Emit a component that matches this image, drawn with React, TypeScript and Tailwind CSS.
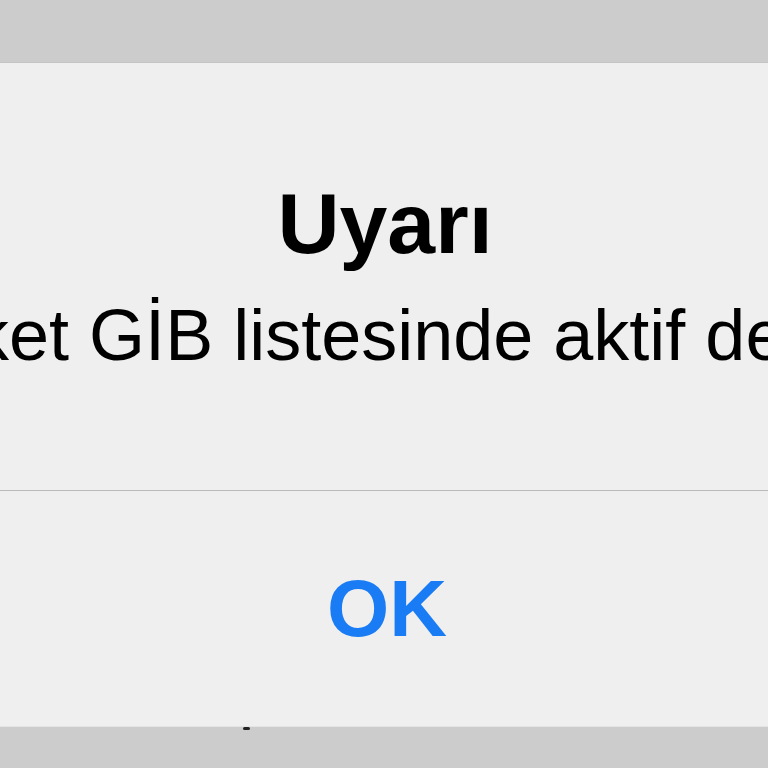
import React from "react";

export default function App() {
  return (
    <div
      className="w-[768px] h-[768px] flex flex-col bg-[#cccccc] overflow-hidden"
      style={{ fontFamily: '"Liberation Sans", Arial, sans-serif' }}
    >
      <div className="h-[63px] shrink-0 bg-[#cccccc] border-b border-[#c4c4c4]" />
      <div className="flex-1 flex flex-col bg-[#efefef] overflow-hidden">
        <div className="h-[427px] shrink-0 flex flex-col overflow-hidden">
          <div className="pt-[117px] flex justify-center">
            <h1 className="text-[86px] leading-none font-bold text-black ml-[2px]">
              Uyarı
            </h1>
          </div>
          <div className="mt-[33px] whitespace-nowrap ml-[-115px]">
            <p className="text-[72px] leading-none text-black">
              Paket GİB listesinde aktif değildir.
            </p>
          </div>
        </div>
        <div className="h-px shrink-0 bg-[#b9b9b9]" />
        <div className="flex-1 flex items-center justify-center">
          <span className="text-[80px] leading-none font-bold text-[#1a7cf5] ml-[6px]">
            OK
          </span>
        </div>
      </div>
      <div className="h-[42px] shrink-0 bg-[#cccccc] border-t border-[#e4e4e4]">
        <div className="ml-[243px] mt-[0px] w-[7px] h-[3px] rounded-full bg-[#222222]" />
      </div>
    </div>
  );
}
